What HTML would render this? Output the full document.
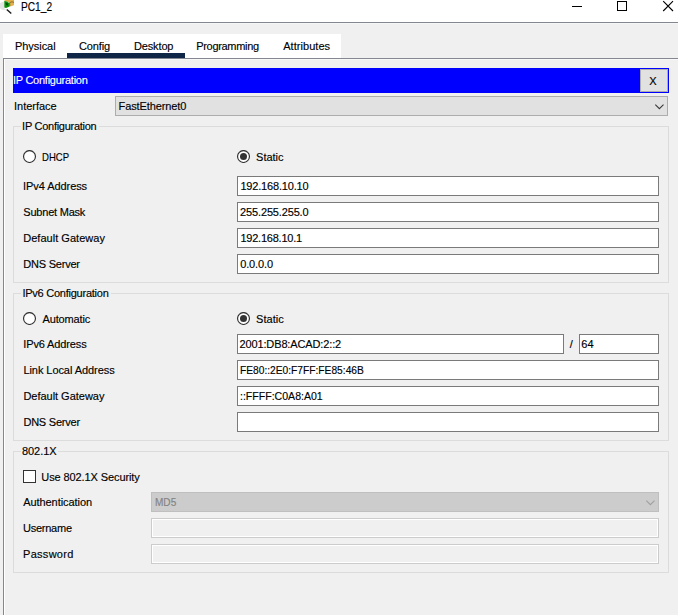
<!DOCTYPE html>
<html>
<head>
<meta charset="utf-8">
<style>
*{box-sizing:border-box;margin:0;padding:0}
html,body{width:678px;height:615px;overflow:hidden;background:#f0f0f0;font-family:"Liberation Sans",sans-serif;font-size:11px;color:#000}
.a{position:absolute}
.t{position:absolute;white-space:nowrap;line-height:14px;height:14px;font-size:11px;-webkit-text-stroke:0.15px currentColor}
#title{left:0;top:0;width:678px;height:22px;background:#fff}
#titleline{left:0;top:22px;width:678px;height:1px;background:#828790}
#titleline2{left:0;top:23px;width:678px;height:1px;background:#f6f6f6}
#tabbar{left:3px;top:34px;width:338px;height:24px;background:#fff}
#underline{left:67px;top:53px;width:118px;height:5px;background:#0f2647}
#panetop{left:3px;top:58px;width:675px;height:1px;background:#828790}
#paneleft{left:3px;top:58px;width:1px;height:557px;background:#828790}
#panetop2{left:4px;top:59px;width:674px;height:1px;background:#f8f8f8}
#paneleft2{left:4px;top:59px;width:1px;height:556px;background:#fff}
#blue{left:13px;top:68px;width:656px;height:25px;background:#0000ff}
#xbtn{left:640px;top:69px;width:28px;height:23px;background:#e1e1e1;border:1px solid #adadad}
.combo{background:#e1e1e1;border:1px solid #adadad}
.gb{border:1px solid #dcdcdc}
.mask{background:#f0f0f0;height:1px}
.in{background:#fff;border:1px solid #7a7a7a}
.dis{background:#f0f0f0;border:1px solid #cccccc;box-shadow:inset 0 0 0 1px #fff}
.chk{width:13px;height:13px;border:1px solid #333;background:#fff}
</style>
</head>
<body>
<div class="a" id="title"></div>
<div class="a" id="titleline"></div>
<div class="a" id="titleline2"></div>
<!-- app icon -->
<svg class="a" style="left:0;top:0" width="16" height="16" viewBox="0 0 16 16">
<path d="M0 3 L4.3 1.2 L4.3 8.2 L7 10.5 L2 9.8 L0 8.2 Z" fill="#e4e4e4"/>
<path d="M4.5 0 L14 0 L14 5.2 L9.8 6.4 L9.4 2.6 L4.5 1 Z" fill="#e2b14c"/>
<path d="M9.6 2.6 L12 1.8 L14 2.4 M9.8 6.2 L9.6 2.8" stroke="#6b5015" stroke-width="0.7" fill="none"/>
<path d="M4.3 1 L7 1.4 L9.5 3.2 L9.6 6.6 L6 7.9 L4.3 7.6 Z" fill="#0c8f0c"/>
<path d="M5.5 2.5 L8 3.5 L8 5.5 L6 5 Z" fill="#065006"/>
<path d="M6.8 9.4 L11.3 13.6" stroke="#1a1a1a" stroke-width="1.4" fill="none"/>
</svg>
<!-- window controls -->
<svg class="a" style="left:560px;top:0" width="118" height="14" viewBox="560 0 118 14">
<path d="M572 6.5 H582" stroke="#000" stroke-width="1" fill="none"/>
<rect x="617.5" y="1.5" width="9" height="9" stroke="#000" stroke-width="1" fill="none"/>
<path d="M663.2 1.2 L673 11 M673 1.2 L663.2 11" stroke="#000" stroke-width="1.1" fill="none"/>
</svg>

<div class="a" id="tabbar"></div>
<div class="a" id="underline"></div>
<div class="a" id="panetop"></div>
<div class="a" id="paneleft"></div>
<div class="a" id="panetop2"></div>
<div class="a" id="paneleft2"></div>

<div class="a" id="blue"></div>
<div class="a" id="xbtn"></div>

<div class="a combo" style="left:115px;top:96px;width:553px;height:20px"></div>
<svg class="a" style="left:650px;top:100px" width="16" height="12" viewBox="650 100 16 12"><path d="M655.3 104.6 L659.4 108.7 L663.5 104.6" stroke="#3a3a3a" stroke-width="1.1" fill="none"/></svg>

<!-- group 1 -->
<div class="a gb" style="left:13px;top:126px;width:656px;height:157px"></div>
<div class="a mask" style="left:21px;top:126px;width:78px"></div>
<svg class="a" style="left:23px;top:150px" width="13" height="13" viewBox="0 0 13 13"><circle cx="6.5" cy="6.5" r="5.95" fill="#fff" stroke="#333" stroke-width="1.15"/></svg>
<svg class="a" style="left:237px;top:150px" width="13" height="13" viewBox="0 0 13 13"><circle cx="6.5" cy="6.5" r="5.95" fill="#fff" stroke="#333" stroke-width="1.15"/><circle cx="6.5" cy="6.5" r="3.5" fill="#333"/></svg>
<div class="a in" style="left:237px;top:176px;width:422px;height:20px"></div>
<div class="a in" style="left:237px;top:202px;width:422px;height:20px"></div>
<div class="a in" style="left:237px;top:228px;width:422px;height:20px"></div>
<div class="a in" style="left:237px;top:254px;width:422px;height:20px"></div>

<!-- group 2 -->
<div class="a gb" style="left:13px;top:293px;width:656px;height:148px"></div>
<div class="a mask" style="left:21px;top:293px;width:90px"></div>
<svg class="a" style="left:23px;top:312px" width="13" height="13" viewBox="0 0 13 13"><circle cx="6.5" cy="6.5" r="5.95" fill="#fff" stroke="#333" stroke-width="1.15"/></svg>
<svg class="a" style="left:237px;top:312px" width="13" height="13" viewBox="0 0 13 13"><circle cx="6.5" cy="6.5" r="5.95" fill="#fff" stroke="#333" stroke-width="1.15"/><circle cx="6.5" cy="6.5" r="3.5" fill="#333"/></svg>
<div class="a in" style="left:237px;top:334px;width:327px;height:20px"></div>
<div class="a in" style="left:579px;top:334px;width:80px;height:20px"></div>
<div class="a in" style="left:237px;top:360px;width:422px;height:20px"></div>
<div class="a in" style="left:237px;top:386px;width:422px;height:20px"></div>
<div class="a in" style="left:237px;top:412px;width:422px;height:20px"></div>

<!-- group 3 -->
<div class="a gb" style="left:13px;top:451px;width:656px;height:122px"></div>
<div class="a mask" style="left:21px;top:451px;width:37px"></div>
<div class="a chk" style="left:23px;top:470px"></div>
<div class="a" style="left:151px;top:492px;width:508px;height:20px;background:#cccccc;border:1px solid #bfbfbf"></div>
<svg class="a" style="left:641px;top:496px" width="16" height="12" viewBox="641 496 16 12"><path d="M646.3 500.6 L650.4 504.7 L654.5 500.6" stroke="#a0a0a0" stroke-width="1.1" fill="none"/></svg>
<div class="a dis" style="left:151px;top:518px;width:508px;height:20px"></div>
<div class="a dis" style="left:151px;top:544px;width:508px;height:20px"></div>

<div class="t" id="t0" style="left:20.60px;top:0px;transform:scaleX(0.8470);transform-origin:0 0;font-size:12px;">PC1<span style="position:relative;top:-1.5px">_</span>2</div>
<div class="t" id="t1" style="left:15.02px;top:39px;letter-spacing:-0.057px;">Physical</div>
<div class="t" id="t2" style="left:78.97px;top:39px;letter-spacing:-0.112px;">Config</div>
<div class="t" id="t3" style="left:133.91px;top:39px;letter-spacing:-0.129px;">Desktop</div>
<div class="t" id="t4" style="left:196.22px;top:39px;letter-spacing:-0.312px;">Programming</div>
<div class="t" id="t5" style="left:283.24px;top:39px;letter-spacing:0.040px;">Attributes</div>
<div class="t" id="t6" style="left:12.92px;top:73px;letter-spacing:-0.252px;color:#fff;">IP Configuration</div>
<div class="t" id="t7" style="left:649.36px;top:74px;">X</div>
<div class="t" id="t8" style="left:14.05px;top:99px;letter-spacing:-0.022px;">Interface</div>
<div class="t" id="t9" style="left:118.58px;top:99px;letter-spacing:-0.119px;">FastEthernet0</div>
<div class="t" id="t10" style="left:22.10px;top:119px;letter-spacing:-0.270px;">IP Configuration</div>
<div class="t" id="t11" style="left:42.20px;top:150px;transform:scaleX(0.8670);transform-origin:0 0;">DHCP</div>
<div class="t" id="t12" style="left:256.05px;top:150px;letter-spacing:-0.004px;">Static</div>
<div class="t" id="t13" style="left:23.05px;top:179px;letter-spacing:-0.068px;">IPv4 Address</div>
<div class="t" id="t14" style="left:240.39px;top:179px;letter-spacing:-0.170px;">192.168.10.10</div>
<div class="t" id="t15" style="left:23.35px;top:205px;letter-spacing:-0.218px;">Subnet Mask</div>
<div class="t" id="t16" style="left:240.11px;top:205px;letter-spacing:-0.151px;">255.255.255.0</div>
<div class="t" id="t17" style="left:23.21px;top:231px;letter-spacing:0.030px;">Default Gateway</div>
<div class="t" id="t18" style="left:240.39px;top:231px;letter-spacing:-0.219px;">192.168.10.1</div>
<div class="t" id="t19" style="left:23.21px;top:257px;letter-spacing:-0.207px;">DNS Server</div>
<div class="t" id="t20" style="left:240.15px;top:257px;letter-spacing:-0.131px;">0.0.0.0</div>
<div class="t" id="t21" style="left:22.42px;top:286px;letter-spacing:-0.241px;">IPv6 Configuration</div>
<div class="t" id="t22" style="left:42.59px;top:312px;letter-spacing:-0.164px;">Automatic</div>
<div class="t" id="t23" style="left:256.05px;top:312px;letter-spacing:0.036px;">Static</div>
<div class="t" id="t24" style="left:23.25px;top:337px;letter-spacing:-0.119px;">IPv6 Address</div>
<div class="t" id="t25" style="left:239.52px;top:337px;letter-spacing:-0.135px;">2001:DB8:ACAD:2::2</div>
<div class="t" id="t26" style="left:569.82px;top:337px;">/</div>
<div class="t" id="t27" style="left:581.16px;top:337px;letter-spacing:0.300px;">64</div>
<div class="t" id="t28" style="left:23.41px;top:363px;letter-spacing:-0.063px;">Link Local Address</div>
<div class="t" id="t29" style="left:239.60px;top:363px;transform:scaleX(0.9290);transform-origin:0 0;">FE80::2E0:F7FF:FE85:46B</div>
<div class="t" id="t30" style="left:23.41px;top:389px;letter-spacing:-0.024px;">Default Gateway</div>
<div class="t" id="t31" style="left:239.55px;top:389px;transform:scaleX(0.9600);transform-origin:0 0;">::FFFF:C0A8:A01</div>
<div class="t" id="t32" style="left:23.41px;top:415px;letter-spacing:-0.218px;">DNS Server</div>
<div class="t" id="t33" style="left:21.91px;top:444px;letter-spacing:-0.016px;">802.1X</div>
<div class="t" id="t34" style="left:41.30px;top:470px;letter-spacing:-0.100px;">Use 802.1X Security</div>
<div class="t" id="t35" style="left:23.17px;top:495px;letter-spacing:-0.059px;">Authentication</div>
<div class="t" id="t36" style="left:154.75px;top:495px;transform:scaleX(0.9134);transform-origin:0 0;color:#838383;">MD5</div>
<div class="t" id="t37" style="left:23.06px;top:521px;letter-spacing:-0.255px;">Username</div>
<div class="t" id="t38" style="left:23.02px;top:547px;letter-spacing:0.291px;">Password</div>
</body>
</html>
